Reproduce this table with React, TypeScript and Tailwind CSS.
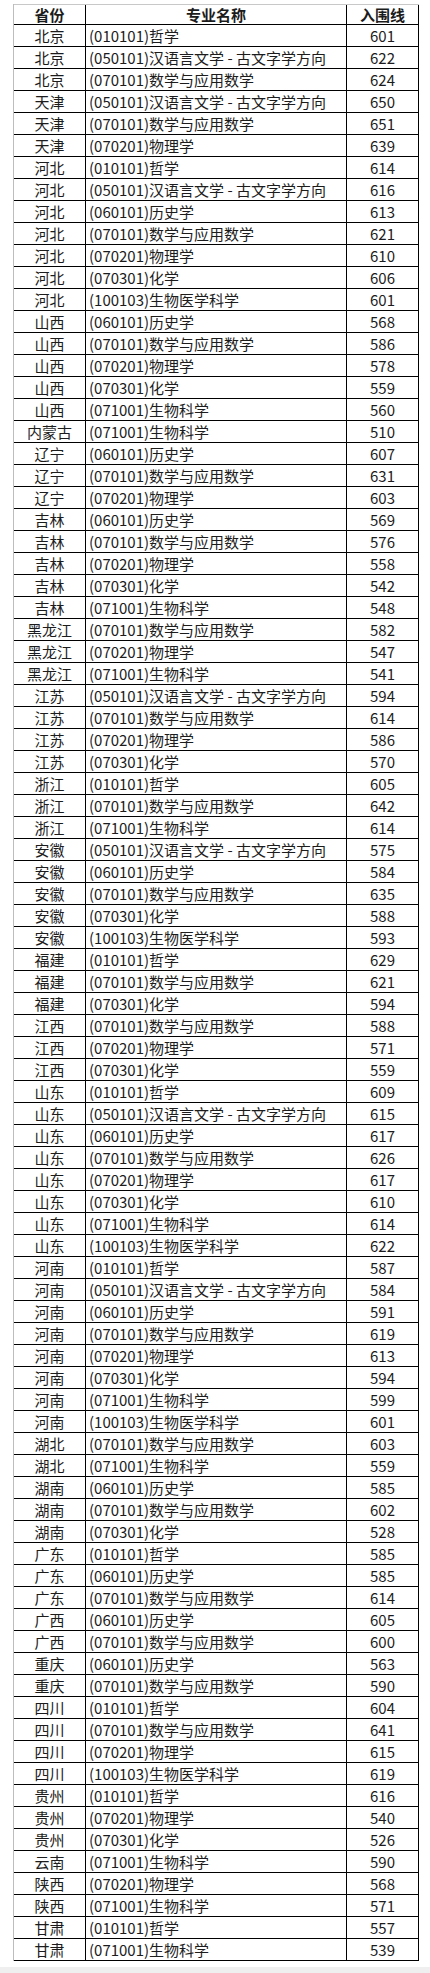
import React from 'react';

type Row = [string, string, number];

const rows: Row[] = [
  ['北京', '(010101)哲学', 601],
  ['北京', '(050101)汉语言文学 - 古文字学方向', 622],
  ['北京', '(070101)数学与应用数学', 624],
  ['天津', '(050101)汉语言文学 - 古文字学方向', 650],
  ['天津', '(070101)数学与应用数学', 651],
  ['天津', '(070201)物理学', 639],
  ['河北', '(010101)哲学', 614],
  ['河北', '(050101)汉语言文学 - 古文字学方向', 616],
  ['河北', '(060101)历史学', 613],
  ['河北', '(070101)数学与应用数学', 621],
  ['河北', '(070201)物理学', 610],
  ['河北', '(070301)化学', 606],
  ['河北', '(100103)生物医学科学', 601],
  ['山西', '(060101)历史学', 568],
  ['山西', '(070101)数学与应用数学', 586],
  ['山西', '(070201)物理学', 578],
  ['山西', '(070301)化学', 559],
  ['山西', '(071001)生物科学', 560],
  ['内蒙古', '(071001)生物科学', 510],
  ['辽宁', '(060101)历史学', 607],
  ['辽宁', '(070101)数学与应用数学', 631],
  ['辽宁', '(070201)物理学', 603],
  ['吉林', '(060101)历史学', 569],
  ['吉林', '(070101)数学与应用数学', 576],
  ['吉林', '(070201)物理学', 558],
  ['吉林', '(070301)化学', 542],
  ['吉林', '(071001)生物科学', 548],
  ['黑龙江', '(070101)数学与应用数学', 582],
  ['黑龙江', '(070201)物理学', 547],
  ['黑龙江', '(071001)生物科学', 541],
  ['江苏', '(050101)汉语言文学 - 古文字学方向', 594],
  ['江苏', '(070101)数学与应用数学', 614],
  ['江苏', '(070201)物理学', 586],
  ['江苏', '(070301)化学', 570],
  ['浙江', '(010101)哲学', 605],
  ['浙江', '(070101)数学与应用数学', 642],
  ['浙江', '(071001)生物科学', 614],
  ['安徽', '(050101)汉语言文学 - 古文字学方向', 575],
  ['安徽', '(060101)历史学', 584],
  ['安徽', '(070101)数学与应用数学', 635],
  ['安徽', '(070301)化学', 588],
  ['安徽', '(100103)生物医学科学', 593],
  ['福建', '(010101)哲学', 629],
  ['福建', '(070101)数学与应用数学', 621],
  ['福建', '(070301)化学', 594],
  ['江西', '(070101)数学与应用数学', 588],
  ['江西', '(070201)物理学', 571],
  ['江西', '(070301)化学', 559],
  ['山东', '(010101)哲学', 609],
  ['山东', '(050101)汉语言文学 - 古文字学方向', 615],
  ['山东', '(060101)历史学', 617],
  ['山东', '(070101)数学与应用数学', 626],
  ['山东', '(070201)物理学', 617],
  ['山东', '(070301)化学', 610],
  ['山东', '(071001)生物科学', 614],
  ['山东', '(100103)生物医学科学', 622],
  ['河南', '(010101)哲学', 587],
  ['河南', '(050101)汉语言文学 - 古文字学方向', 584],
  ['河南', '(060101)历史学', 591],
  ['河南', '(070101)数学与应用数学', 619],
  ['河南', '(070201)物理学', 613],
  ['河南', '(070301)化学', 594],
  ['河南', '(071001)生物科学', 599],
  ['河南', '(100103)生物医学科学', 601],
  ['湖北', '(070101)数学与应用数学', 603],
  ['湖北', '(071001)生物科学', 559],
  ['湖南', '(060101)历史学', 585],
  ['湖南', '(070101)数学与应用数学', 602],
  ['湖南', '(070301)化学', 528],
  ['广东', '(010101)哲学', 585],
  ['广东', '(060101)历史学', 585],
  ['广东', '(070101)数学与应用数学', 614],
  ['广西', '(060101)历史学', 605],
  ['广西', '(070101)数学与应用数学', 600],
  ['重庆', '(060101)历史学', 563],
  ['重庆', '(070101)数学与应用数学', 590],
  ['四川', '(010101)哲学', 604],
  ['四川', '(070101)数学与应用数学', 641],
  ['四川', '(070201)物理学', 615],
  ['四川', '(100103)生物医学科学', 619],
  ['贵州', '(010101)哲学', 616],
  ['贵州', '(070201)物理学', 540],
  ['贵州', '(070301)化学', 526],
  ['云南', '(071001)生物科学', 590],
  ['陕西', '(070201)物理学', 568],
  ['陕西', '(071001)生物科学', 571],
  ['甘肃', '(010101)哲学', 557],
  ['甘肃', '(071001)生物科学', 539],
];

const App: React.FC = () => {
  return (
    <div
      className="w-[430px] h-[1973px] bg-white flex flex-col text-[15px] text-[#1c1c1c]"
      style={{ fontFamily: '"Noto Sans CJK SC", "Noto Sans", sans-serif' }}
    >
      <div className="ml-[13px] mt-[4px] w-[406px] border-l border-[#bdbdbd]">
        {/* 表头 */}
        <div className="flex h-[21px] border-t border-b border-t-[#c8c8c8] border-b-black font-bold leading-[19px]">
          <div className="w-[72px] border-r border-black text-center">省份</div>
          <div className="w-[261px] border-r border-black text-center">专业名称</div>
          <div className="w-[72px] border-r border-black text-center">入围线</div>
        </div>

        {rows.map(([prov, major, score], i) => (
          <div key={i} className="flex h-[22px] border-b border-black leading-[21px]">
            <div className="w-[72px] border-r border-black text-center whitespace-nowrap">{prov}</div>
            <div className="w-[261px] border-r border-black pl-[3px] whitespace-nowrap">{major}</div>
            <div className="w-[72px] border-r border-black text-center">{score}</div>
          </div>
        ))}
      </div>

      <div className="flex-1" />
      <div className="h-[6px] bg-[#efefef]" />
    </div>
  );
};

export default App;
